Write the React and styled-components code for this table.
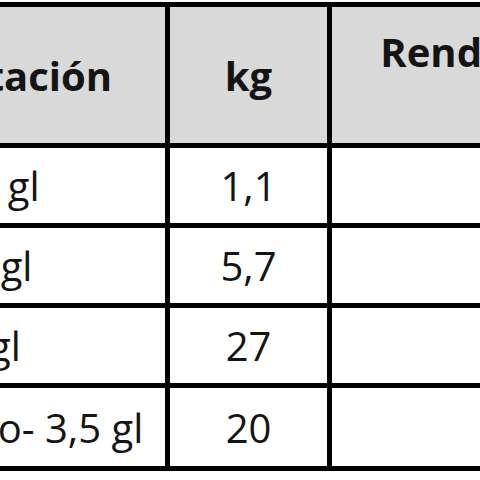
import React from 'react';
import styled, { createGlobalStyle } from 'styled-components';

const rows = [
    { presentation: 'Lata 1/4 gl', kg: '1,1' },
    { presentation: 'Galón 1 gl', kg: '5,7' },
    { presentation: 'Cubo 5 gl', kg: '27' },
    { presentation: 'Tarro liso- 3,5 gl', kg: '20' },
];

const GlobalStyle = createGlobalStyle`
    html, body {
        margin: 0;
        padding: 0;
        background: #fff;
        overflow: hidden;
    }
    body {
        font-family: "Open Sans", "Noto Sans", sans-serif;
        color: #141414;
    }
`;

const Table = styled.div`
    display: grid;
    grid-template-columns: 340px 157px 354px;
    grid-template-rows: 136px 75px 75px 75px 78px;
    gap: 5px;
    padding: 5px;
    width: max-content;
    margin: 2px 0 0 -180px;
    background: #000;
`;

const Cell = styled.div`
    display: flex;
    align-items: ${(p) => (p.$top ? 'flex-start' : 'center')};
    justify-content: ${(p) => (p.$left ? 'flex-start' : 'center')};
    padding: ${(p) => (p.$top ? '17px 0 0' : p.$left ? '0 0 0 22px' : '0')};
    background: ${(p) => (p.$head ? '#d9d9d9' : '#fff')};
    font-size: 40px;
    font-weight: ${(p) => (p.$head ? 700 : 400)};
    white-space: nowrap;
    overflow: hidden;
`;

const HeadLabel = styled.span`
    margin-left: ${(p) => (p.$shift ? '3px' : '0')};
`;

const App = () => {
    return (
        <>
            <GlobalStyle />
            <Table>
                <Cell $head $left><HeadLabel $shift>Presentación</HeadLabel></Cell>
                <Cell $head>kg</Cell>
                <Cell $head $top>Rendimiento</Cell>
                {rows.map((row, index) => (
                    <React.Fragment key={index}>
                        <Cell $left>{row.presentation}</Cell>
                        <Cell>{row.kg}</Cell>
                        <Cell></Cell>
                    </React.Fragment>
                ))}
            </Table>
        </>
    );
};

export default App;
